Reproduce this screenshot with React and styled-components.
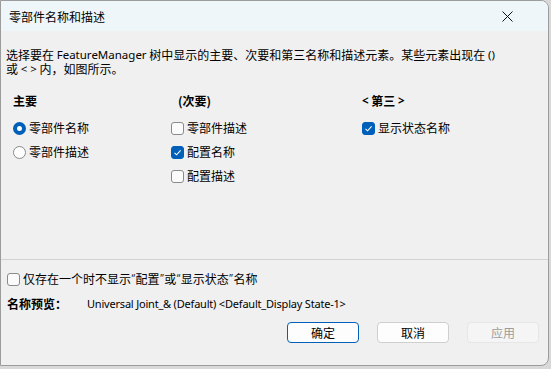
import React from 'react';
import styled, { createGlobalStyle } from 'styled-components';

const GlobalStyle = createGlobalStyle`
    html, body {
        margin: 0;
        padding: 0;
        background: #d9d9d9;
    }
    body {
        font-family: "Segoe UI", "Noto Sans", "Noto Sans CJK SC", sans-serif;
        font-size: 12px;
        color: #000;
    }
`;

const Window = styled.div`
    width: 549px;
    height: 366px;
    box-sizing: border-box;
    border: 1px solid #9c9c9c;
    border-radius: 0 8px 8px 0;
    background: #f0f0f0;
    display: flex;
    flex-direction: column;
    overflow: hidden;
`;

const TitleBar = styled.div`
    height: 30px;
    flex: none;
    background: #eef6f9;
    display: flex;
    align-items: center;
    justify-content: space-between;
    padding: 0 35px 0 8px;
    font-family: "Noto Sans CJK SC", sans-serif;
    font-size: 12px;
`;

const CloseIcon = styled.svg`
    width: 11px;
    height: 11px;
    display: block;
`;

const Intro = styled.div`
    margin: 17px 0 0 5px;
    font-family: "Noto Sans CJK SC", sans-serif;
`;

const IntroLine = styled.div`
    height: 14px;
    line-height: 14px;
    white-space: nowrap;
`;

const Latin = styled.span`
    font-family: "Noto Sans", sans-serif;
    font-size: 11.5px;
    vertical-align: top;
`;

const Columns = styled.div`
    display: grid;
    grid-template-columns: 158px 191px 1fr;
    padding-left: 12px;
    margin-top: 17px;
`;

const Column = styled.div`
    display: flex;
    flex-direction: column;
`;

const Heading = styled.div`
    height: 16px;
    line-height: 16px;
    font-weight: bold;
    font-family: "Noto Sans CJK SC", sans-serif;
    padding-left: ${p => p.$indent || 0}px;
    margin-bottom: 7px;
`;

const Option = styled.label`
    display: flex;
    align-items: center;
    gap: 3px;
    height: 24px;
    line-height: 16px;
    font-family: "Noto Sans CJK SC", sans-serif;
    white-space: nowrap;
`;

const Radio = styled.span`
    width: 13px;
    height: 13px;
    box-sizing: border-box;
    border-radius: 50%;
    flex: none;
    border: ${p => (p.$on ? '4px solid #005fb8' : '1px solid #8a8a8a')};
    background: #fff;
`;

const Box = styled.span`
    width: 13px;
    height: 13px;
    box-sizing: border-box;
    border-radius: 3px;
    flex: none;
    display: flex;
    align-items: center;
    justify-content: center;
    border: 1px solid ${p => (p.$on ? '#005fb8' : '#8a8a8a')};
    background: ${p => (p.$on ? '#005fb8' : '#fbfbfb')};
`;

const Divider = styled.div`
    margin-top: auto;
    height: 1px;
    background: #d2d2d2;
`;

const Footer = styled.div`
    padding: 7px 9px 22px 6px;
    display: flex;
    flex-direction: column;
`;

const Quote = styled.span`
    display: inline-block;
    font-family: "Noto Sans", sans-serif;
    font-size: 10px;
    line-height: 10px;
    vertical-align: 2px;
    margin: 0 0.5px;
    color: #222;
`;

const PreviewRow = styled.div`
    display: flex;
    align-items: center;
    height: 24px;
`;

const PreviewLabel = styled.span`
    width: 80px;
    font-weight: bold;
    font-family: "Noto Sans CJK SC", sans-serif;
`;

const PreviewText = styled.span`
    font-family: "Noto Sans", sans-serif;
    font-size: 11px;
    letter-spacing: -0.2px;
`;

const Buttons = styled.div`
    display: flex;
    justify-content: flex-end;
    gap: 18px;
    margin-top: 7px;
`;

const Button = styled.button`
    width: 72px;
    height: 21px;
    box-sizing: border-box;
    padding: 0;
    border-radius: 4px;
    font-family: "Noto Sans CJK SC", sans-serif;
    font-size: 12px;
    background: ${p => (p.$disabled ? '#f5f5f5' : '#fdfdfd')};
    color: ${p => (p.$disabled ? '#9d9d9d' : '#000')};
    border: 1px solid ${p => (p.$primary ? '#005fb8' : p.$disabled ? '#e6e6e6' : '#cfcfcf')};
`;

const Check = () => (
    <svg width="9" height="9" viewBox="0 0 9 9">
        <path d="M1.5 4.8 L3.6 6.8 L7.6 2.4" fill="none" stroke="#fff" strokeWidth="1.1" />
    </svg>
);

const CheckOption = ({ on, children }) => (
    <Option>
        <Box $on={on}>{on && <Check />}</Box>
        <span>{children}</span>
    </Option>
);

const RadioOption = ({ on, children }) => (
    <Option>
        <Radio $on={on} />
        <span>{children}</span>
    </Option>
);

const App = () => {
    return (
        <>
            <GlobalStyle />
            <Window>
                <TitleBar>
                    <span>零部件名称和描述</span>
                    <CloseIcon viewBox="0 0 11 11">
                        <path d="M0.5 0.5 L10.5 10.5 M10.5 0.5 L0.5 10.5" stroke="#111" strokeWidth="1" />
                    </CloseIcon>
                </TitleBar>
                <Intro>
                    <IntroLine>
                        选择要在 <Latin>FeatureManager</Latin> 树中显示的主要、次要和第三名称和描述元素。某些元素出现在 <Latin>()</Latin>
                    </IntroLine>
                    <IntroLine>
                        或 <Latin>&lt; &gt;</Latin> 内，如图所示。
                    </IntroLine>
                </Intro>
                <Columns>
                    <Column>
                        <Heading>主要</Heading>
                        <RadioOption on>零部件名称</RadioOption>
                        <RadioOption>零部件描述</RadioOption>
                    </Column>
                    <Column>
                        <Heading $indent={7}>(次要)</Heading>
                        <CheckOption>零部件描述</CheckOption>
                        <CheckOption on>配置名称</CheckOption>
                        <CheckOption>配置描述</CheckOption>
                    </Column>
                    <Column>
                        <Heading><Latin>&lt;</Latin> 第三 <Latin>&gt;</Latin></Heading>
                        <CheckOption on>显示状态名称</CheckOption>
                    </Column>
                </Columns>
                <Divider />
                <Footer>
                    <CheckOption>
                        仅存在一个时不显示<Quote>&#8220;</Quote>配置<Quote>&#8221;</Quote>或<Quote>&#8220;</Quote>显示状态<Quote>&#8221;</Quote>名称
                    </CheckOption>
                    <PreviewRow>
                        <PreviewLabel>名称预览：</PreviewLabel>
                        <PreviewText>Universal Joint_&amp; (Default) &lt;Default_Display State-1&gt;</PreviewText>
                    </PreviewRow>
                    <Buttons>
                        <Button $primary>确定</Button>
                        <Button>取消</Button>
                        <Button $disabled>应用</Button>
                    </Buttons>
                </Footer>
            </Window>
        </>
    );
};

export default App;
